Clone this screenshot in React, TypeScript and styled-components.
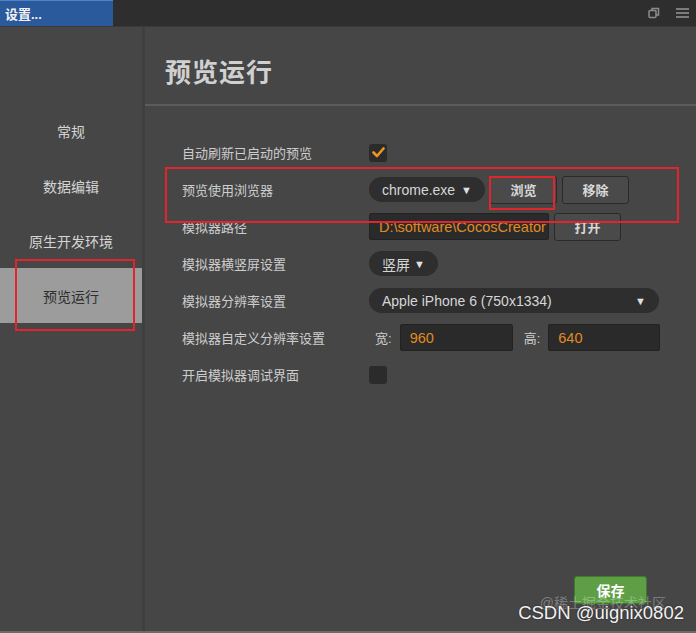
import React, {useState} from 'react';
import styled, {createGlobalStyle} from 'styled-components';

const GlobalStyle = createGlobalStyle`
html, body {
  margin: 0;
  padding: 0;
  background: #464646;
}
* {
  box-sizing: border-box;
}
body {
  font-family: "Liberation Sans", "Noto Sans CJK SC", sans-serif;
}
`;

const Window = styled.div`
position: relative;
width: 696px;
height: 633px;
display: flex;
flex-direction: column;
background: #464646;
color: #cfcfcf;
overflow: hidden;
border-bottom: 2px solid #6a6a6a;
`;

const TitleBar = styled.div`
display: flex;
align-items: stretch;
justify-content: space-between;
height: 27px;
background: #2e2e2e;
border-bottom: 1px solid #3a3a3a;
`;

const Tab = styled.div`
width: 113px;
display: flex;
align-items: center;
padding-left: 5px;
background: #2a599c;
border-top: 1px solid #4f84c9;
color: #f2f2f2;
font-size: 13px;
font-weight: bold;
`;

const TitleIcons = styled.div`
display: flex;
align-items: center;
gap: 16px;
padding-right: 7px;
color: #8a8a8a;
`;

const Body = styled.div`
flex: 1;
display: flex;
min-height: 0;
`;

const Sidebar = styled.div`
width: 145px;
padding-top: 76px;
display: flex;
flex-direction: column;
border-right: 3px solid #3f3f3f;
`;

const NavItem = styled.div<{ $active?: boolean }>`
height: 55px;
display: flex;
align-items: center;
justify-content: center;
font-size: 14px;
color: ${p => (p.$active ? '#2e2e2e' : '#d4d4d4')};
background: ${p => (p.$active ? '#9c9c9c' : 'transparent')};
`;

const Main = styled.div`
flex: 1;
display: flex;
flex-direction: column;
`;

const Header = styled.div`
height: 79px;
display: flex;
align-items: center;
padding-left: 20px;
padding-top: 10px;
border-bottom: 2px solid #5c5c5c;
font-size: 26px;
font-weight: bold;
color: #d0d0d0;
letter-spacing: 1px;
`;

const Form = styled.div`
padding: 28px 0 0 37px;
display: flex;
flex-direction: column;
`;

const Row = styled.div`
height: 37px;
display: flex;
align-items: center;
`;

const Label = styled.div`
width: 187px;
font-size: 13px;
color: #cdcdcd;
`;

const Controls = styled.div`
display: flex;
align-items: center;
gap: 5px;
`;

const Check = styled.div<{ $on?: boolean }>`
width: 18px;
height: 18px;
border-radius: 3px;
background: #2b2b2b;
display: flex;
align-items: center;
justify-content: center;
`;

const Select = styled.div<{ $w: number }>`
width: ${p => p.$w}px;
height: 25px;
border-radius: 13px;
background: #2e2e2e;
display: flex;
align-items: center;
justify-content: space-between;
padding: 0 13px;
font-size: 14px;
color: #d6d6d6;
`;

const Arrow = styled.span`
font-size: 11px;
color: #e0e0e0;
margin-left: 4px;
`;

const Button = styled.div`
width: 67px;
height: 28px;
border-radius: 3px;
background: #4a4a4a;
border: 1px solid #2a2a2a;
display: flex;
align-items: center;
justify-content: center;
font-size: 13px;
font-weight: bold;
color: #d8d8d8;
`;

const Input = styled.div<{ $w: number }>`
width: ${p => p.$w}px;
height: 27px;
background: #2a2a2a;
border: 1px solid #222;
border-radius: 2px;
display: flex;
align-items: center;
padding-left: 9px;
font-size: 14.5px;
color: #e08a24;
white-space: nowrap;
overflow: hidden;
`;

const SizeLabel = styled.span`
font-size: 13px;
color: #cdcdcd;
margin: 0 3px 0 6px;
`;

const Footer = styled.div`
margin-top: auto;
display: flex;
justify-content: flex-end;
padding: 0 49px 27px 0;
`;

const SaveButton = styled.div`
width: 73px;
height: 28px;
border-radius: 3px;
background: #5e9f46;
border: 1px solid #3f7a2d;
display: flex;
align-items: center;
justify-content: center;
font-size: 14px;
font-weight: bold;
color: #ffffff;
`;

const Mark = styled.div<{ $x: number; $y: number; $w: number; $h: number }>`
position: absolute;
left: ${p => p.$x}px;
top: ${p => p.$y}px;
width: ${p => p.$w}px;
height: ${p => p.$h}px;
border: 2px solid #e0252c;
pointer-events: none;
`;

const Watermark = styled.div`
position: absolute;
right: 12px;
bottom: 7px;
font-size: 18.5px;
color: #f2f2f2;
text-shadow: 0 0 2px rgba(0, 0, 0, 0.6);
`;

const FaintMark = styled.div`
position: absolute;
right: 30px;
bottom: 19px;
font-size: 14px;
color: rgba(255, 255, 255, 0.3);
`;

const navItems = ['常规', '数据编辑', '原生开发环境', '预览运行'];

const App = () => {
    const [active] = useState('预览运行');

    return (
        <Window>
            <GlobalStyle/>
            <TitleBar>
                <Tab>设置...</Tab>
                <TitleIcons>
                    <svg width="12" height="12" viewBox="0 0 12 12" fill="none" stroke="#8c8c8c" strokeWidth="1.5">
                        <rect x="1" y="3.5" width="7" height="7" rx="1"/>
                        <path d="M4 3.5V1.5h6.5V8H8"/>
                    </svg>
                    <svg width="13" height="12" viewBox="0 0 13 12" fill="#7c7c7c">
                        <rect x="0" y="1" width="13" height="2"/>
                        <rect x="0" y="5" width="13" height="2"/>
                        <rect x="0" y="9" width="13" height="2"/>
                    </svg>
                </TitleIcons>
            </TitleBar>
            <Body>
                <Sidebar>
                    {navItems.map(item => (
                        <NavItem key={item} $active={item === active}>{item}</NavItem>
                    ))}
                </Sidebar>
                <Main>
                    <Header>预览运行</Header>
                    <Form>
                        <Row>
                            <Label>自动刷新已启动的预览</Label>
                            <Check $on>
                                <svg width="13" height="11" viewBox="0 0 13 11">
                                    <path d="M1.5 5.5l3.5 3.5 6.5-7.5" stroke="#f0961e" strokeWidth="2.6" fill="none"
                                          strokeLinecap="round" strokeLinejoin="round"/>
                                </svg>
                            </Check>
                        </Row>
                        <Row>
                            <Label>预览使用浏览器</Label>
                            <Controls>
                                <Select $w={116}>chrome.exe<Arrow>▼</Arrow></Select>
                                <Button>浏览</Button>
                                <Button>移除</Button>
                            </Controls>
                        </Row>
                        <Row>
                            <Label>模拟器路径</Label>
                            <Controls>
                                <Input $w={180}>D:\software\CocosCreator</Input>
                                <Button>打开</Button>
                            </Controls>
                        </Row>
                        <Row>
                            <Label>模拟器横竖屏设置</Label>
                            <Select $w={69}>竖屏<Arrow>▼</Arrow></Select>
                        </Row>
                        <Row>
                            <Label>模拟器分辨率设置</Label>
                            <Select $w={290}>Apple iPhone 6 (750x1334)<Arrow>▼</Arrow></Select>
                        </Row>
                        <Row>
                            <Label>模拟器自定义分辨率设置</Label>
                            <Controls>
                                <SizeLabel>宽:</SizeLabel>
                                <Input $w={113}>960</Input>
                                <SizeLabel>高:</SizeLabel>
                                <Input $w={112}>640</Input>
                            </Controls>
                        </Row>
                        <Row>
                            <Label>开启模拟器调试界面</Label>
                            <Check/>
                        </Row>
                    </Form>
                    <Footer>
                        <SaveButton>保存</SaveButton>
                    </Footer>
                </Main>
            </Body>
            <Mark $x={15} $y={259} $w={120} $h={72}/>
            <Mark $x={165} $y={167} $w={514} $h={56}/>
            <Mark $x={489} $y={176} $w={66} $h={34}/>
            <FaintMark>@稀土掘金技术社区</FaintMark>
            <Watermark>CSDN @uignix0802</Watermark>
        </Window>
    );
};

export default App;
